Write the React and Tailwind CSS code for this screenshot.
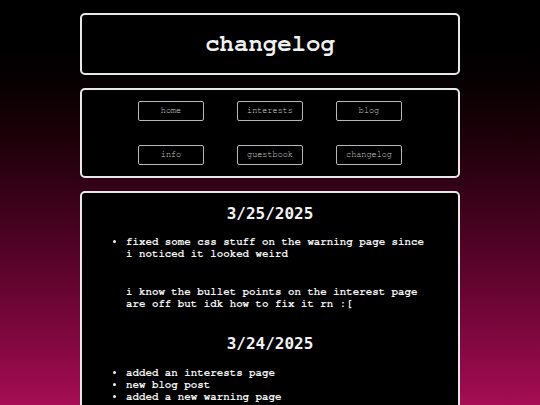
import React from 'react'

const navLinks = ['home', 'interests', 'blog', 'info', 'guestbook', 'changelog']

const entries = [
  {
    date: '3/25/2025',
    items: [
      'fixed some css stuff on the warning page since i noticed it looked weird',
    ],
    note: 'i know the bullet points on the interest page are off but idk how to fix it rn :[',
  },
  {
    date: '3/24/2025',
    items: ['added an interests page', 'new blog post', 'added a new warning page'],
  },
]

function App() {
  return (
    <div className="h-[405px] overflow-hidden bg-gradient-to-b from-black from-[3%] to-[#a60d54] pt-[13px] flex flex-col items-center gap-[13px] font-['FreeMono','Liberation_Mono',monospace]">
      {/* title */}
      <div className="w-[380px] h-[62px] shrink-0 bg-black border-2 border-[#e8e8e8] rounded-[5px] flex items-center justify-center">
        <h1 className="text-[24px] font-bold text-[#f0f0f0] leading-none">changelog</h1>
      </div>

      {/* nav */}
      <div className="w-[380px] h-[90px] shrink-0 bg-black border-2 border-[#e8e8e8] rounded-[5px] pt-[11px]">
        <div className="grid grid-cols-[66px_66px_66px] gap-x-[33px] gap-y-[24px] justify-center">
          {navLinks.map((link) => (
            <a
              key={link}
              className="h-[20px] border border-[#b8b8b8] rounded-[2px] flex items-center justify-center text-[8.5px] text-[#d4d4d4]"
            >
              {link}
            </a>
          ))}
        </div>
      </div>

      {/* changelog entries */}
      <div className="w-[380px] shrink-0 bg-black border-2 border-[#e8e8e8] rounded-[5px] pt-[11px] pb-8 text-[#f2f2f2]">
        {entries.map((entry, i) => (
          <div key={entry.date} className={i > 0 ? 'mt-[23px]' : ''}>
            <h2 className="text-center text-[16px] leading-[19px] font-bold font-['DejaVu_Sans_Mono',monospace]">
              {entry.date}
            </h2>
            <ul className={`${i > 0 ? 'mt-[14px]' : 'mt-[13px]'} pl-[44px] pr-[30px] list-disc text-[10.8px] leading-[12.4px] font-bold`}>
              {entry.items.map((item) => (
                <li key={item}>{item}</li>
              ))}
            </ul>
            {entry.note && (
              <p className="mt-[25px] pl-[44px] pr-[30px] text-[10.8px] leading-[12.4px] font-bold">
                {entry.note}
              </p>
            )}
          </div>
        ))}
      </div>
    </div>
  )
}

export default App
